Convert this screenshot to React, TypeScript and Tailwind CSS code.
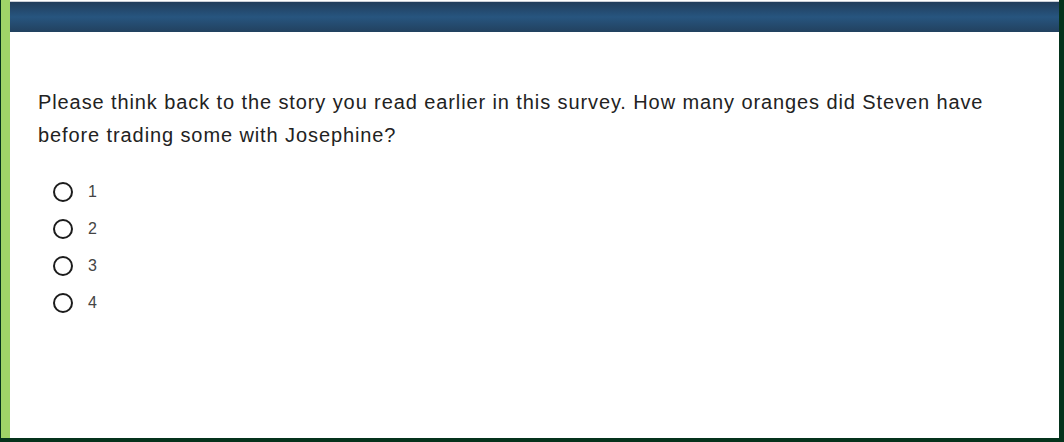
import React, { useState } from 'react';

const options = ['1', '2', '3', '4'];

const App: React.FC = () => {
  const [selected, setSelected] = useState<string | null>(null);

  return (
    <div className="flex h-screen w-full bg-[#05331c] pl-px pr-[5px] pb-[4px] font-['Liberation_Sans',Arial,sans-serif]">
      {/* green accent bar */}
      <div className="w-[9px] shrink-0 bg-[#a0d468]" />

      <div className="flex flex-1 flex-col bg-white">
        {/* header strip */}
        <div className="h-px bg-white" />
        <div className="h-px bg-[#c9ced6]" />
        <div className="h-[30px] bg-[linear-gradient(to_bottom,#203d5b,#27557f_50%,#22415f)]" />

        <div className="pl-[28px] pr-[50px] pt-[54px]">
          <p className="text-[20px] leading-[33px] tracking-[0.9px] text-[#222]">
            Please think back to the story you read earlier in this survey. How many oranges did Steven have
            before trading some with Josephine?
          </p>

          <div className="mt-[21px] flex flex-col">
            {options.map((opt) => (
              <label
                key={opt}
                className="flex h-[37px] cursor-pointer items-center"
                onClick={() => setSelected(opt)}
              >
                <span className="ml-[15px] flex h-[20px] w-[20px] items-center justify-center rounded-full border-2 border-[#1c1c1c]">
                  {selected === opt && <span className="h-[10px] w-[10px] rounded-full bg-[#1c1c1c]" />}
                </span>
                <span className="ml-[15px] text-[16px] text-[#444]">{opt}</span>
              </label>
            ))}
          </div>
        </div>
      </div>
    </div>
  );
};

export default App;
